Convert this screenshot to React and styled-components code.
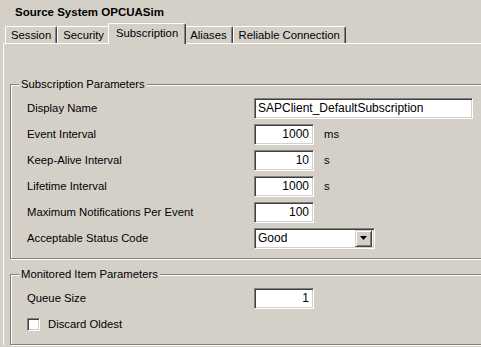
import React from 'react';
import styled, { createGlobalStyle } from 'styled-components';

const GlobalStyle = createGlobalStyle`
  html, body {
    margin: 0;
    padding: 0;
    background: #d4d0c8;
    overflow: hidden;
  }
  body {
    font-family: "Liberation Sans", Arial, sans-serif;
    font-size: 11.3px;
    color: #000;
  }
`;

const Window = styled.div`
  width: 481px;
  height: 347px;
  overflow: hidden;
  background: #d4d0c8;
`;

const Title = styled.div`
  height: 24px;
  padding-left: 15px;
  display: flex;
  align-items: center;
  font-weight: bold;
  font-size: 11.5px;
`;

const TabBar = styled.div`
  display: flex;
  align-items: flex-end;
  height: 19px;
  padding-left: 5px;
  position: relative;
  z-index: 1;
`;

const Tab = styled.div`
  box-sizing: border-box;
  height: ${p => (p.active ? '21px' : '17px')};
  margin: ${p => (p.active ? '0 -2px -1px -2px' : '0')};
  padding: ${p => (p.active ? '0 7px 2px' : '0 5px')};
  display: flex;
  align-items: center;
  background: #d4d0c8;
  border-top: 1px solid #fff;
  border-left: 1px solid #fff;
  border-right: 1px solid #404040;
  border-top-left-radius: 2px;
  border-top-right-radius: 2px;
  box-shadow: inset -1px 0 #808080;
  white-space: nowrap;
  position: relative;
  z-index: ${p => (p.active ? 2 : 0)};
`;

const Panel = styled.div`
  width: 560px;
  margin-left: 3px;
  border-top: 1px solid #fff;
  border-left: 1px solid #fff;
  padding: 40px 0 0 6px;
`;

const Group = styled.div`
  position: relative;
  box-sizing: border-box;
  border: 1px solid #808080;
  box-shadow: inset 1px 1px #fff, 1px 1px #fff;
  padding: ${p => p.pad || '10px 0 7px 16px'};
  margin-top: ${p => p.gap || '0'};
`;

const Legend = styled.span`
  position: absolute;
  top: -7px;
  left: 8px;
  padding: 0 2px;
  background: #d4d0c8;
  line-height: 13px;
`;

const Row = styled.div`
  display: flex;
  align-items: center;
  height: 26px;
`;

const Label = styled.div`
  width: 227px;
  white-space: nowrap;
`;

const Sunken = styled.div`
  box-sizing: border-box;
  height: 21px;
  width: ${p => p.w}px;
  background: #fff;
  border-top: 1px solid #808080;
  border-left: 1px solid #808080;
  border-right: 1px solid #fff;
  border-bottom: 1px solid #fff;
  box-shadow: inset 1px 1px #404040, inset -1px -1px #d4d0c8;
  display: flex;
  align-items: center;
  justify-content: ${p => (p.right ? 'flex-end' : 'flex-start')};
  padding: 0 4px 0 3px;
  white-space: nowrap;
  font-size: 12px;
`;

const Unit = styled.span`
  margin-left: 10px;
`;

const DropButton = styled.div`
  box-sizing: border-box;
  width: 17px;
  height: 17px;
  margin-left: auto;
  margin-right: -2px;
  background: #d4d0c8;
  border-top: 1px solid #d4d0c8;
  border-left: 1px solid #d4d0c8;
  border-right: 1px solid #404040;
  border-bottom: 1px solid #404040;
  box-shadow: inset 1px 1px #fff, inset -1px -1px #808080;
  display: flex;
  align-items: center;
  justify-content: center;
`;

const CheckBox = styled.div`
  box-sizing: border-box;
  width: 13px;
  height: 13px;
  background: #fff;
  border-top: 1px solid #808080;
  border-left: 1px solid #808080;
  border-right: 1px solid #fff;
  border-bottom: 1px solid #fff;
  box-shadow: inset 1px 1px #404040, inset -1px -1px #d4d0c8;
  margin-right: 8px;
`;

const rows = [
  { label: 'Event Interval', value: '1000', unit: 'ms' },
  { label: 'Keep-Alive Interval', value: '10', unit: 's' },
  { label: 'Lifetime Interval', value: '1000', unit: 's' },
  { label: 'Maximum Notifications Per Event', value: '100' },
];

export default function App() {
  return (
    <Window>
      <GlobalStyle />
      <Title>Source System OPCUASim</Title>
      <TabBar>
        <Tab>Session</Tab>
        <Tab>Security</Tab>
        <Tab active>Subscription</Tab>
        <Tab>Aliases</Tab>
        <Tab>Reliable Connection</Tab>
      </TabBar>
      <Panel>
        <Group>
          <Legend>Subscription Parameters</Legend>
          <Row>
            <Label>Display Name</Label>
            <Sunken w={219}>SAPClient_DefaultSubscription</Sunken>
          </Row>
          {rows.map(r => (
            <Row key={r.label}>
              <Label>{r.label}</Label>
              <Sunken w={60} right>{r.value}</Sunken>
              {r.unit && <Unit>{r.unit}</Unit>}
            </Row>
          ))}
          <Row>
            <Label>Acceptable Status Code</Label>
            <Sunken w={121}>
              Good
              <DropButton>
                <svg width="7" height="4" viewBox="0 0 7 4">
                  <path d="M0 0h7L3.5 4z" fill="#000" />
                </svg>
              </DropButton>
            </Sunken>
          </Row>
        </Group>
        <Group gap="15px" pad="10px 0 7px 16px">
          <Legend>Monitored Item Parameters</Legend>
          <Row>
            <Label>Queue Size</Label>
            <Sunken w={60} right>1</Sunken>
          </Row>
          <Row>
            <CheckBox />
            Discard Oldest
          </Row>
        </Group>
      </Panel>
    </Window>
  );
}
